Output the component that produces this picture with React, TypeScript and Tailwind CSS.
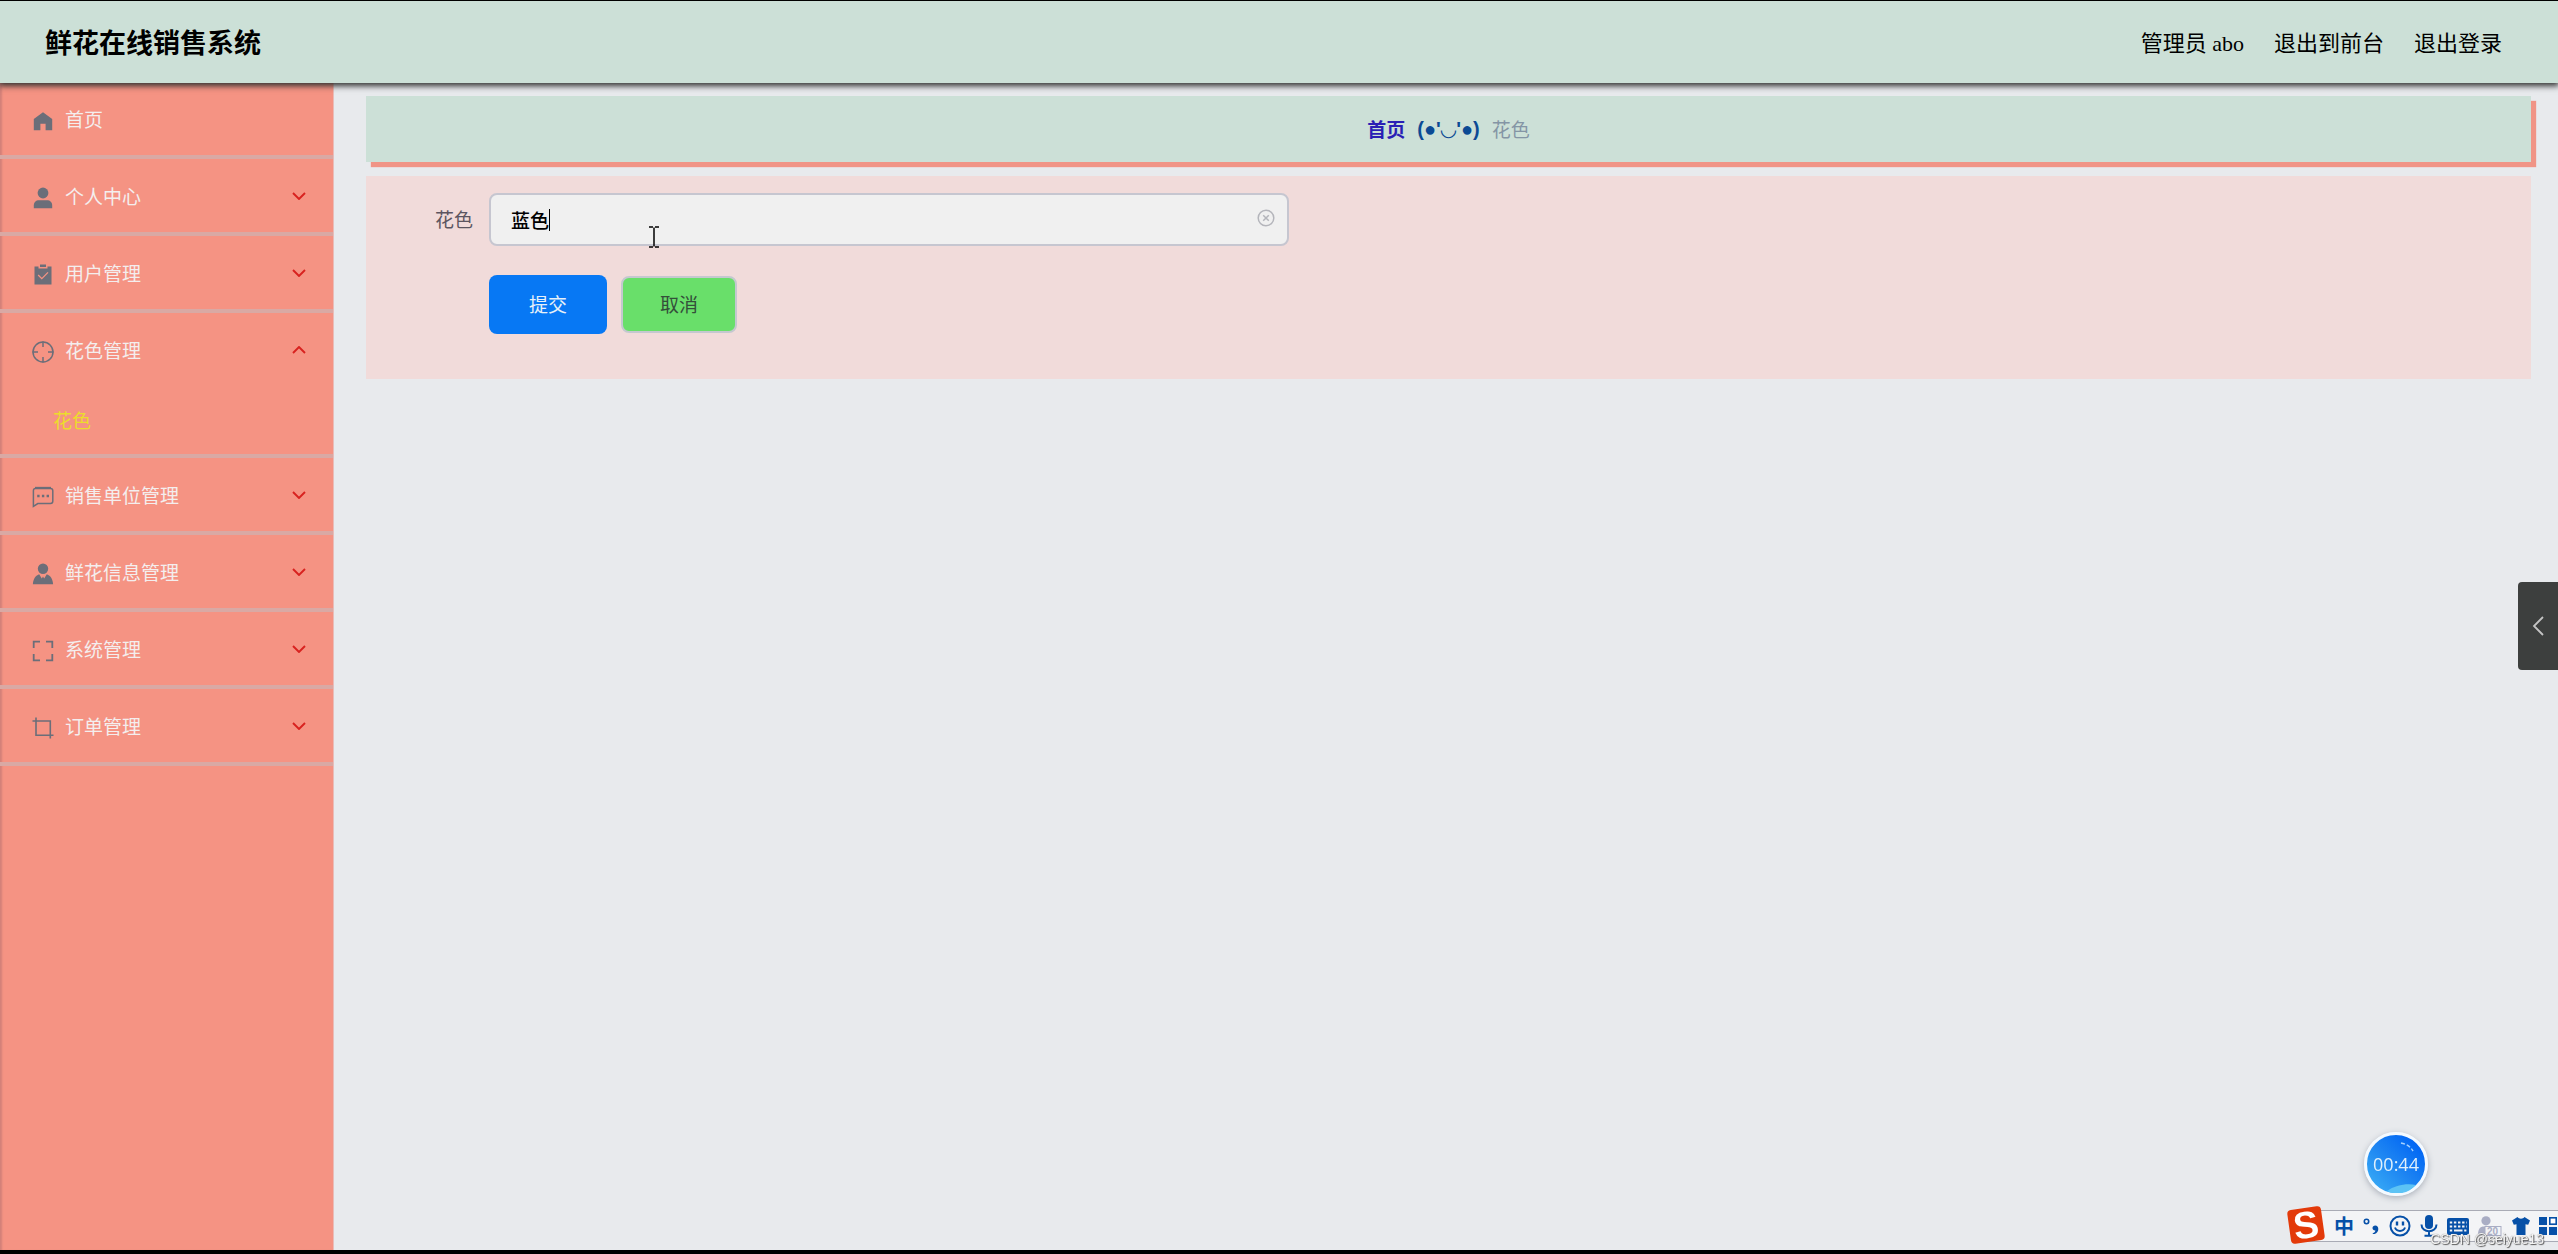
import type { ReactNode } from 'react';

const HomeIcon = () => (
  <svg viewBox="0 0 24 24" className="size-6" fill="currentColor" aria-hidden="true">
    <path d="M12 3.2 2.8 10v11.2h6.6v-6.4h5.2v6.4h6.6V10z" />
  </svg>
);

const UserSolidIcon = () => (
  <svg viewBox="0 0 24 24" className="size-6" fill="currentColor" aria-hidden="true">
    <circle cx="12" cy="7" r="5.4" />
    <path d="M2.8 22.2v-2.6c0-3.4 2-5.4 5.4-5.4h7.6c3.4 0 5.4 2 5.4 5.4v2.6z" />
  </svg>
);

const ClaimedIcon = () => (
  <svg viewBox="0 0 24 24" className="size-6" aria-hidden="true">
    <path fill="currentColor" d="M9 1.5h6V4H9z" />
    <path fill="currentColor" d="M3.5 3.5h4v2h9v-2h4v18h-17z" />
    <path fill="none" stroke="#f59383" strokeWidth="1.3" d="m7.2 12 3.600 3.600 6.200-6.200" />
  </svg>
);

const AimIcon = () => (
  <svg viewBox="0 0 24 24" className="size-6" fill="none" stroke="currentColor" strokeWidth="1.500" aria-hidden="true">
    <circle cx="12" cy="12" r="10" />
    <path d="M12 1.5v5.5M12 17v5.5M1.5 12h5.5M17 12h5.5" />
  </svg>
);

const ChatIcon = () => (
  <svg viewBox="0 0 24 24" className="size-6" fill="none" stroke="currentColor" strokeWidth="1.500" aria-hidden="true">
    <path d="M4.5 3.5h15c1.5 0 2.3.8 2.3 2.2v10.6c0 1.4-.8 2.2-2.3 2.2H6.8L2.4 21.4V5.7c0-1.4.7-2.2 2.1-2.2z" />
    <path strokeWidth="2.400" strokeDasharray="2.4 2.3" d="M6.2 11h11.800" />
    <path d="M4 2.6h16" />
  </svg>
);

const CustomIcon = () => (
  <svg viewBox="0 0 24 24" className="size-6" fill="currentColor" aria-hidden="true">
    <circle cx="12" cy="6.800" r="5.200" />
    <path d="M1.9 22.2c.2-4.8 2.2-8.4 6.3-10l2.6 4.4L12 14.5l1.2 2.1 2.6-4.4c4.1 1.6 6.1 5.2 6.3 10z" />
  </svg>
);

const FullIcon = () => (
  <svg viewBox="0 0 24 24" className="size-6" fill="none" stroke="currentColor" strokeWidth="1.800" aria-hidden="true">
    <path d="M2.7 9V2.7H9M15 2.7h6.3V9M21.3 15v6.3H15M9 21.3H2.7V15" />
  </svg>
);

const CropIcon = () => (
  <svg viewBox="0 0 24 24" className="size-6" fill="none" stroke="currentColor" strokeWidth="1.600" aria-hidden="true">
    <path d="M5 1.5v17.7h17.5M1.5 5h17.8v17.5" />
  </svg>
);

const Chevron = ({ open }: { open?: boolean }) => (
  <svg viewBox="0 0 14 8" className="h-2 w-3.5" fill="none" stroke="#d8221f" strokeWidth="1.900" aria-hidden="true">
    <path d={open ? 'm1 7 6-6 6 6' : 'm1 1 6 6 6-6'} />
  </svg>
);

type Item = { label: string; icon: ReactNode; children?: string[]; leaf?: boolean };

const items: Item[] = [
  { label: '首页', icon: <HomeIcon />, leaf: true },
  { label: '个人中心', icon: <UserSolidIcon /> },
  { label: '用户管理', icon: <ClaimedIcon /> },
  { label: '花色管理', icon: <AimIcon />, children: ['花色'] },
  { label: '销售单位管理', icon: <ChatIcon /> },
  { label: '鲜花信息管理', icon: <CustomIcon /> },
  { label: '系统管理', icon: <FullIcon /> },
  { label: '订单管理', icon: <CropIcon /> },
];

function Sidebar() {
  return (
    <nav className="w-[334px] shrink-0 border-r border-[#e9bcb8] bg-[#f59383] shadow-[inset_3px_0_2px_-1px_#d28079]">
      <ul>
        {items.map((item) => (
          <li key={item.label} className="border-b-4 border-[#d9a9a4]">
            <button
              type="button"
              className={`flex w-full items-center pr-[27px] pl-[31px] text-left ${item.leaf ? 'h-[72px]' : 'h-[73px]'}`}
            >
              <span className="pt-1 text-[#6b6e79]">{item.icon}</span>
              <span className="ml-2.5 grow text-[19px] leading-7 text-[#f4eeee]">{item.label}</span>
              {!item.leaf && <Chevron open={!!item.children} />}
            </button>
            {item.children?.map((child) => (
              <a key={child} href="#" className="flex h-[68px] items-center pl-[53px] text-[19px] text-[#ecdc2c]">
                {child}
              </a>
            ))}
          </li>
        ))}
      </ul>
    </nav>
  );
}

function Header() {
  return (
    <header className="relative z-10 flex h-[83px] items-center justify-between border-t border-black bg-[#cce0d7] pr-14 pl-[45px] text-black shadow-[0_2px_6px_1px_#333]">
      <h1 className="text-[27px] font-bold">鲜花在线销售系统</h1>
      <div className="flex items-center gap-[30px] pt-0.5 font-['Liberation_Serif','Noto_Sans_CJK_SC',serif] text-[22px]">
        <span>管理员 abo</span>
        <a href="#">退出到前台</a>
        <a href="#">退出登录</a>
      </div>
    </header>
  );
}

function Breadcrumb() {
  return (
    <div className="flex h-[66px] items-center justify-center gap-3 bg-[#cce0d7] text-[19px] shadow-[5px_5px_1px_#f09486]">
      <a href="#" className="font-bold text-[#2a1fb5]">首页</a>
      <span className="font-['Liberation_Sans','DejaVu_Sans',sans-serif] text-[20px] leading-6 font-bold text-[#0b4a94]">
        (●'◡'●)
      </span>
      <span className="text-[#8495a5]">花色</span>
    </div>
  );
}

function ColorForm() {
  return (
    <form className="mt-3.5 bg-[#f1dbda] pt-[17px] pb-[45px] pl-[69px]" onSubmit={(e) => e.preventDefault()}>
      <div className="flex items-center">
        <label htmlFor="color" className="w-[54px] text-[19px] text-[#5c5560]">花色</label>
        <div className="relative w-[800px]">
          <input
            id="color"
            defaultValue="蓝色"
            className="h-[53px] w-full rounded-lg border-2 border-[#c6c6d0] bg-[#f0f0f0] pr-10 pl-5 text-[19px] font-medium text-black outline-none"
          />
          <span className="absolute top-4 left-[60px] h-[22px] w-px bg-black" />
          <svg viewBox="0 0 18 18" className="absolute top-4 right-3.5 size-[18px]" fill="none" stroke="#b4b5bb" strokeWidth="1.500" aria-hidden="true">
            <circle cx="9" cy="9" r="7.800" />
            <path d="m6.2 6.2 5.6 5.6M11.8 6.2l-5.6 5.6" />
          </svg>
          <svg viewBox="0 0 10 22" className="absolute top-[33px] left-40 h-[22px] w-2.5" fill="none" stroke="#000" strokeWidth="1.500" aria-hidden="true">
            <path d="M0 1h4M6 1h4M5 1.5v19M0 21h4M6 21h4" />
          </svg>
        </div>
      </div>
      <div className="mt-[29px] flex items-center gap-3.5 pl-[54px] text-[19px]">
        <button type="submit" className="h-[59px] w-[118px] rounded-lg bg-[#0778f4] text-[#e6f1f8]">提交</button>
        <button type="button" className="h-[57px] w-[116px] rounded-lg border-2 border-[#c4c8cf] bg-[#69df6a] text-[#34503a]">取消</button>
      </div>
    </form>
  );
}

function ImeBar() {
  return (
    <div className="fixed right-0 bottom-3 flex h-8 w-[264px] items-center border-y border-[#a9abb5] bg-[#f3f4f6] text-[#0650a8]">
      <div className="absolute -top-[3px] -left-[5px] flex size-[34px] -rotate-8 items-center justify-center rounded-sm bg-[#e33a0a] font-['Liberation_Sans',sans-serif] text-[38px] leading-none font-bold text-white">
        S
      </div>
      <div className="flex w-full items-center justify-between pl-10">
        <span className="text-[20px] leading-5 font-bold">中</span>
        <svg viewBox="0 0 16 16" className="size-4" fill="none" stroke="currentColor" aria-hidden="true">
          <circle cx="3.500" cy="3.500" r="2.200" strokeWidth="1.600" />
          <path fill="currentColor" stroke="none" d="M9.5 15.5c2-.8 2.8-1.8 2.9-3-1.7.1-2.9-.8-2.9-2.4s1.2-2.6 2.8-2.6c1.800 0 3 1.300 3 3.500 0 2.700-1.800 4.600-4.900 5.400z" />
        </svg>
        <svg viewBox="0 0 22 22" className="size-[22px]" fill="none" stroke="currentColor" strokeWidth="2" aria-hidden="true">
          <circle cx="11" cy="11" r="9.500" />
          <path strokeWidth="2.400" d="M8 6.5v4M14 6.5v4" />
          <path d="M6 12.5c1.5 4.5 8.5 4.5 10 0" />
        </svg>
        <svg viewBox="0 0 18 22" className="h-[22px] w-[18px]" fill="none" stroke="currentColor" strokeWidth="2" aria-hidden="true">
          <rect x="5" y="0" width="8" height="14" rx="4" fill="currentColor" stroke="none" />
          <path d="M1.5 9.5c0 9 15 9 15 0M9 16v5M4.5 20.8h9" />
        </svg>
        <svg viewBox="0 0 22 17" className="h-[17px] w-[22px]" aria-hidden="true">
          <rect width="22" height="17" rx="2" fill="currentColor" />
          <path stroke="#f3f4f6" strokeWidth="2" strokeDasharray="2.4 1.7" d="M2.8 4.5h17M2.8 8.5h17" />
          <path stroke="#f3f4f6" strokeWidth="2" d="M2.8 12.5h2.4M7 12.5h8.5M17.2 12.5h2.2" />
        </svg>
        <svg viewBox="0 0 24 20" className="h-5 w-6" aria-hidden="true">
          <circle cx="8" cy="4.800" r="4.600" fill="#a9adc4" />
          <path fill="#a9adc4" d="M0 19c0-6 2-8.500 6-8.500h4c4 0 6 2.500 6 8.500z" />
          <rect x="7" y="10.500" width="16" height="9" fill="#f3f4f6" stroke="#a9adc4" />
          <text x="9" y="18.500" fontSize="10" fontWeight="700" fontFamily="Liberation Sans" fill="#a9adc4">20</text>
        </svg>
        <svg viewBox="0 0 18 18" className="size-[18px]" fill="currentColor" aria-hidden="true">
          <path d="M5.5 0c1.5 2.3 5.5 2.3 7 0L18 3.5l-1.8 4.3-2.7-.6V18h-9V7.2l-2.7.6L0 3.5z" />
        </svg>
        <svg viewBox="0 0 19 18" className="h-[18px] w-[19px]" fill="currentColor" aria-hidden="true">
          <rect width="8" height="8" />
          <rect y="10" width="8" height="8" />
          <rect x="10" y="10" width="8" height="8" />
          <rect x="10.800" y=".800" width="6.400" height="6.400" fill="#fff" stroke="currentColor" strokeWidth="1.600" />
        </svg>
      </div>
      <span className="absolute top-5 right-3.5 font-['Liberation_Sans',sans-serif] text-sm leading-4 whitespace-nowrap text-[#f4f4f4] [text-shadow:1px_1px_1px_#555,0_0_1px_#777]">
        CSDN @seiyue13
      </span>
    </div>
  );
}

export default function App() {
  return (
    <div className="flex min-h-screen flex-col border-b-4 border-black bg-[#e8eaed] font-['Noto_Sans_CJK_SC',sans-serif]">
      <Header />
      <div className="flex grow">
        <Sidebar />
        <main className="grow pt-[13px] pr-[27px] pl-8">
          <Breadcrumb />
          <ColorForm />
        </main>
      </div>
      <button
        type="button"
        aria-label="展开"
        className="fixed top-[582px] right-0 flex h-[88px] w-10 items-center justify-center rounded-l bg-[#3d3f3e]"
      >
        <svg viewBox="0 0 12 20" className="h-5 w-3" fill="none" stroke="#c4c4c4" strokeWidth="1.800" aria-hidden="true">
          <path d="m11 1-9 9 9 9" />
        </svg>
      </button>
      <div className="fixed right-[130px] bottom-[58px] flex size-16 items-center justify-center rounded-full border-3 border-[#f4faff] bg-linear-to-tr from-[#3fb2f5] via-[#1c83f2] to-[#0058f5] shadow-[0_2px_6px_#aab0ba]">
        <svg viewBox="0 0 58 58" className="absolute inset-0 size-full" fill="none" aria-hidden="true">
          <path fill="#5cc3f5" d="M20 56c8-6 20-8 29-6-7 8-19 11-29 6z" />
          <path stroke="#a6d2ff" strokeWidth="1.500" strokeDasharray="4 2" d="M34 8c5 1 9 3 12 8" />
        </svg>
        <span className="relative font-['Open_Sans',sans-serif] text-lg text-[#dff0fc]">00:44</span>
      </div>
      <ImeBar />
    </div>
  );
}
